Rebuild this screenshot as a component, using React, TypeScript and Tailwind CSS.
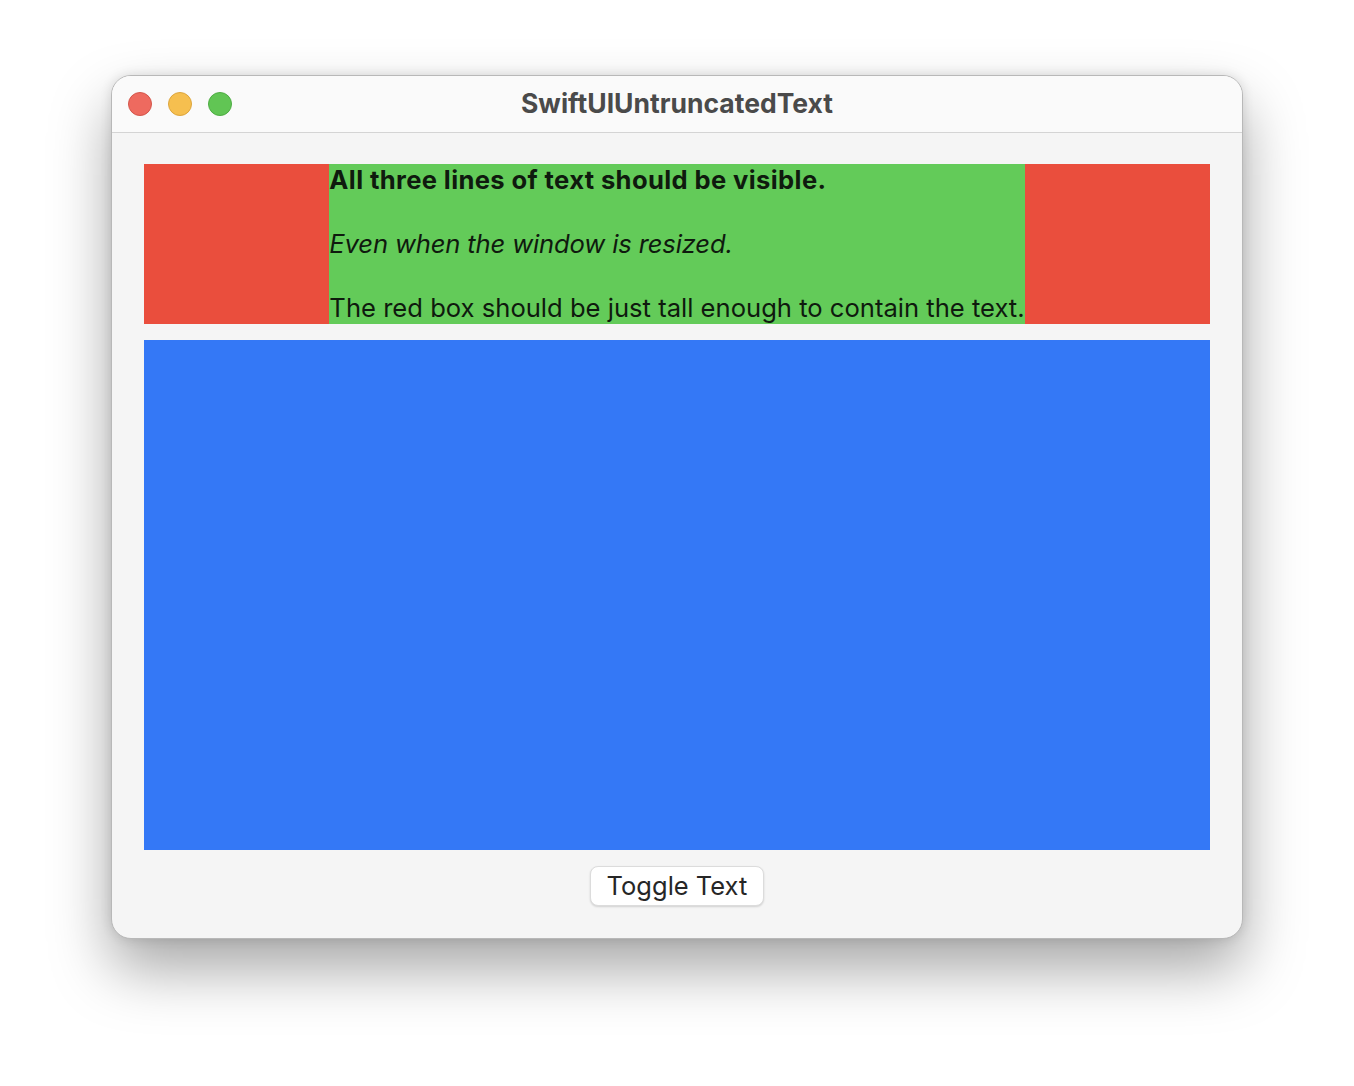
const TrafficLight = ({ color, border }: { color: string; border: string }) => (
    <span className={`block size-6 rounded-full border ${color} ${border}`} />
)

export default function App() {
    return (
        <div className="flex min-h-[1086px] w-[1354px] items-start justify-center bg-white pt-[75px] font-['Inter',sans-serif]">
            <div className="flex h-[864px] w-[1132px] flex-col overflow-hidden rounded-[20px] border border-[#b8b8b8] bg-[#f5f5f5] shadow-[0_30px_60px_rgba(0,0,0,0.35),0_0_12px_rgba(0,0,0,0.12)]">
                <div className="relative flex h-[57px] shrink-0 items-center border-b border-[#d4d4d4] bg-[#fafafa] px-4">
                    <div className="flex gap-4">
                        <TrafficLight color="bg-[#ee6a5f]" border="border-[#d3564b]" />
                        <TrafficLight color="bg-[#f6bf4f]" border="border-[#dca53d]" />
                        <TrafficLight color="bg-[#61c554]" border="border-[#4eac43]" />
                    </div>
                    <div className="absolute inset-0 flex items-center justify-center text-[26.5px] font-bold text-[#4a4a4a]">
                        SwiftUIUntruncatedText
                    </div>
                </div>
                <div className="flex flex-1 flex-col px-8 pt-[31px]">
                    <div className="flex h-[160px] justify-center bg-[#ea4e3d]">
                        <div className="flex flex-col gap-8 bg-[#63cb59] text-[25.6px] leading-[32px] text-[#0f1a0e]">
                            <p className="font-bold tracking-[0.37px]">All three lines of text should be visible.</p>
                            <p className="italic tracking-[-0.15px]">Even when the window is resized.</p>
                            <p>The red box should be just tall enough to contain the text.</p>
                        </div>
                    </div>
                    <div className="mt-4 h-[510px] bg-[#3478f6]" />
                    <div className="flex justify-center pt-4">
                        <button className="h-[40px] rounded-[8px] border border-[#dcdcdc] bg-white px-[16px] text-[25.5px] leading-none text-[#262626] shadow-[0_1px_2px_rgba(0,0,0,0.15)]">
                            Toggle Text
                        </button>
                    </div>
                </div>
            </div>
        </div>
    )
}
